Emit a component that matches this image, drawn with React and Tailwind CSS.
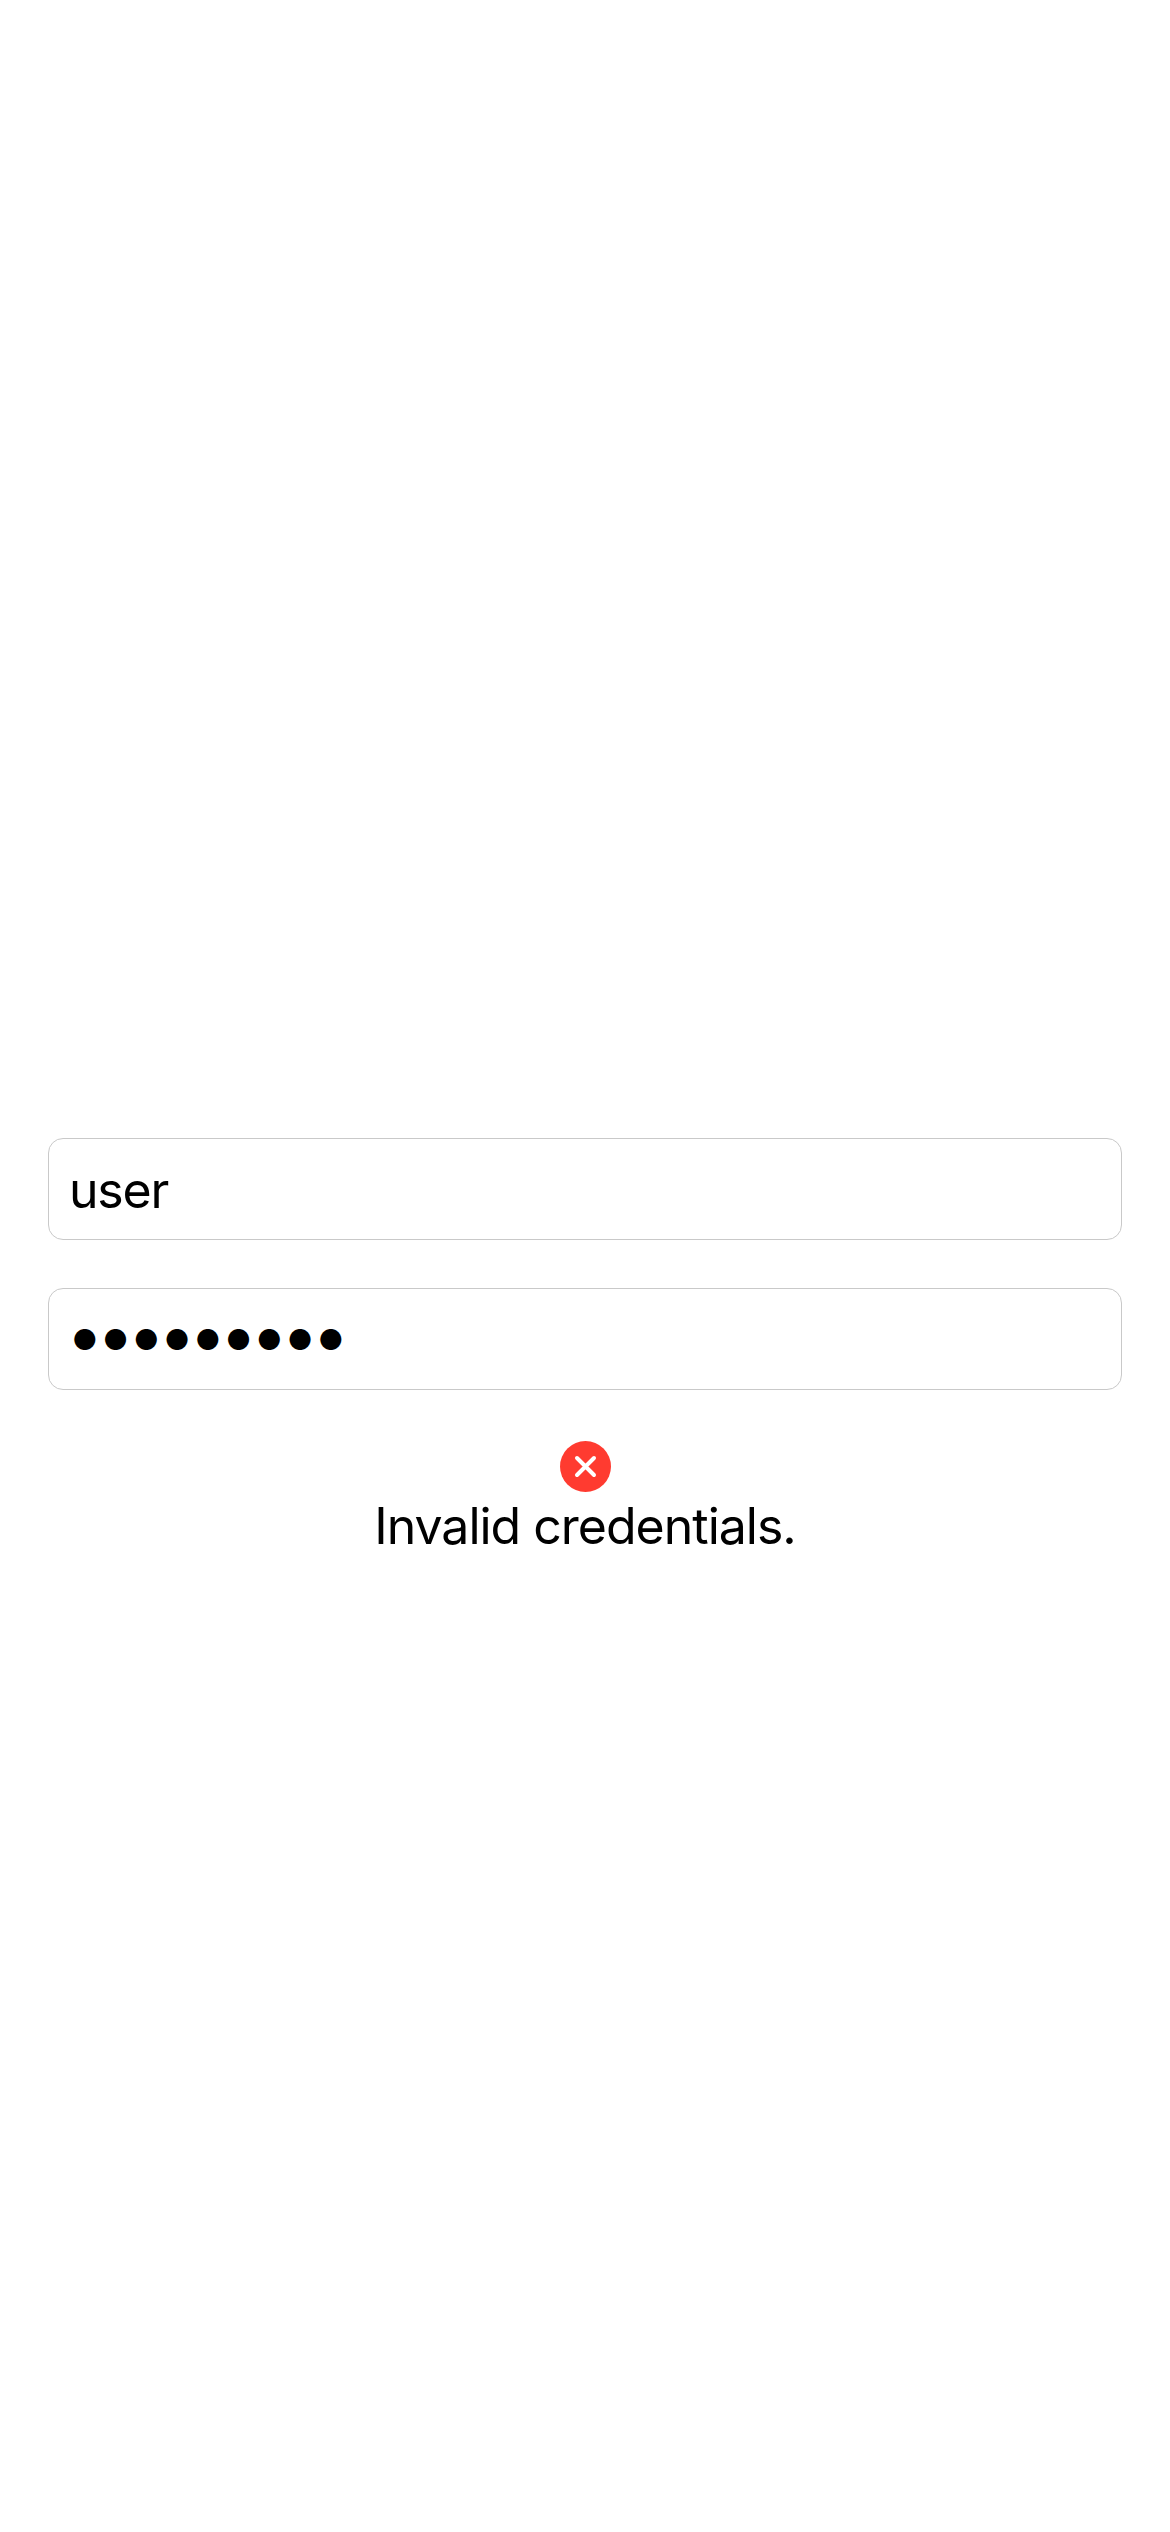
function Field({ children }) {
  return (
    <div className="flex h-[102px] items-center rounded-[15px] border border-[#c9c9c9] bg-white pl-[20px]">
      {children}
    </div>
  );
}

function ErrorIcon() {
  return (
    <svg className="ml-px size-[51px]" viewBox="0 0 51 51" fill="none" aria-hidden="true">
      <circle cx="25.5" cy="25.5" r="25.5" fill="#ff3b30" />
      <path d="M17 17 34 34M34 17 17 34" stroke="#fff" strokeWidth="4" strokeLinecap="round" />
    </svg>
  );
}

export default function App() {
  return (
    <main className="flex h-[2532px] w-[1170px] flex-col bg-white px-12 pt-[1138px] font-['Inter',sans-serif] text-[50px] leading-[61px] text-black">
      <div className="flex flex-col gap-12">
        <Field>
          <span className="mt-0.5 tracking-[-1.2px]">user</span>
        </Field>
        <Field>
          <span className="mt-[3px] pl-[3px] text-[28px] leading-[61px] tracking-[5.15px]">●●●●●●●●●</span>
        </Field>
      </div>
      <div className="mt-[51px] flex flex-col items-center">
        <ErrorIcon />
        <p className="mt-1 tracking-[-1px]">Invalid credentials.</p>
      </div>
    </main>
  );
}
